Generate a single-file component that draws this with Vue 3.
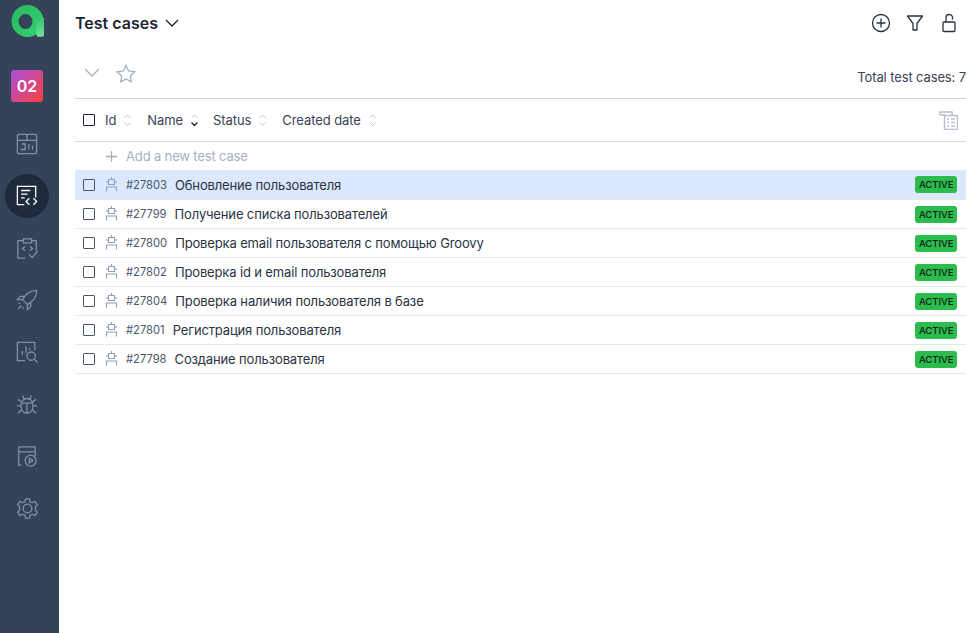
<script setup>
const rows = [
  { id: '#27803', name: 'Обновление пользователя', active: true },
  { id: '#27799', name: 'Получение списка пользователей' },
  { id: '#27800', name: 'Проверка email пользователя с помощью Groovy' },
  { id: '#27802', name: 'Проверка id и email пользователя' },
  { id: '#27804', name: 'Проверка наличия пользователя в базе' },
  { id: '#27801', name: 'Регистрация пользователя' },
  { id: '#27798', name: 'Создание пользователя' },
]
const cols = [
  { label: 'Id' },
  { label: 'Name', sorted: true },
  { label: 'Status' },
  { label: 'Created date' },
]
</script>

<template>
  <div class="app">
    <aside class="side">
      <svg class="logo" width="34" height="34" viewBox="0 0 34 34">
        <defs>
          <linearGradient id="lg" x1="0" y1="0" x2="1" y2="1">
            <stop offset="0" stop-color="#27b85c" />
            <stop offset="1" stop-color="#35d274" />
          </linearGradient>
          <linearGradient id="ls" x1="0" y1="0" x2="0" y2="1">
            <stop offset="0" stop-color="#2fc768" />
            <stop offset="1" stop-color="#6fe39b" />
          </linearGradient>
        </defs>
        <path fill-rule="evenodd" d="M16.500 1a16 16 0 1 0 0 32a16 16 0 1 0 0-32zM14.500 10a7 7.500 0 1 1 0 15a7 7.500 0 1 1 0-15z" fill="url(#lg)" />
        <path d="M25.500 14h7.500v17c0 1-.7 1.800-1.800 1.800h-3.900c-1.100 0-1.800-.8-1.800-1.800z" fill="url(#ls)" />
      </svg>
      <div class="badge">02</div>
      <button class="nav">
        <svg width="22" height="22" viewBox="0 0 24 24"><rect x="1.500" y="1.500" width="21" height="21" rx="1.500" /><path d="M1.500 8h21M12 1.500V8M6 12h4v6H5M14 12v6M18 14v4" /></svg>
      </button>
      <button class="nav current">
        <svg width="22" height="22" viewBox="0 0 24 24"><path d="M9 21.500H1.500v-20h20v12" /><path d="M5.500 6h10M5.500 10h7M5.500 14h4M14.500 14.500l-3.500 3.500 3.500 3.500M19 14.500l3.500 3.500-3.500 3.500" /></svg>
      </button>
      <button class="nav">
        <svg width="22" height="22" viewBox="0 0 24 24"><path d="M8 4H2v19h8M17 4h5v11" /><path d="M8 2h9v4.500H8zM10 10l-3 2.500L10 15M15 10l3 2.500-3 2.500M14 19l3.500 3.500 6-7" /></svg>
      </button>
      <button class="nav">
        <svg width="22" height="22" viewBox="0 0 24 24"><path d="M22.500 1.500c-5.500 0-9.500 2-13 6.500L7 11.500l5.500 5.500 3.500-2.500c4.500-3.500 6.500-7.500 6.500-13zM9.500 8H5L1.500 11.500 7 11.500M16 14.500V19l-3.500 3.500L12.500 17M6 18l-3.500 3.500M8.500 20L7 21.500M4.500 15L3 16.500" /></svg>
      </button>
      <button class="nav">
        <svg width="22" height="22" viewBox="0 0 24 24"><path d="M10 21.500H1.500v-20h19V10" /><path d="M7 15v-4M11 13V6M15 10V8" /><circle cx="16.500" cy="16.500" r="4.500" /><path d="M20 20l3.500 3.500" /></svg>
      </button>
      <button class="nav">
        <svg width="22" height="22" viewBox="0 0 24 24"><path d="M12 6C8 6 5.500 9.500 5.500 14s2.500 8 6.500 8 6.500-3.500 6.500-8-2.500-8-6.500-8zM8.500 7L7.500 2.500M15.500 7l1-4.500M5.500 11h13M12 11v11M5.500 14H1M18.500 14H23M6 18.500L2 22M18 18.500l4 3.500M6 9.500L2 7M18 9.500l4-2.500" /></svg>
      </button>
      <button class="nav">
        <svg width="22" height="22" viewBox="0 0 24 24"><path d="M6 22H3V2h18v10M3 7.500h18" /><circle cx="16" cy="17" r="6" /><path d="M14.500 14.500l4 2.500-4 2.500z" /></svg>
      </button>
      <button class="nav">
        <svg width="23" height="23" viewBox="0 0 24 24"><circle cx="12" cy="12" r="4.500" /><path d="M10 2h4l.7 3 2.300 1 2.700-1.500 2.600 3.500-2 2.200v3.600l2 2.200-2.600 3.500-2.700-1.500-2.300 1-.7 3h-4l-.7-3-2.300-1-2.700 1.500L1.700 16l2-2.200v-3.600L1.700 8l2.600-3.500L7 6l2.300-1z" stroke-linejoin="round" /></svg>
      </button>
    </aside>

    <main class="main">
      <header class="top">
        <h1 class="title">Test cases</h1>
        <svg class="caret" width="14" height="8" viewBox="0 0 14 8"><path d="M1 1l6 6 6-6" /></svg>
        <div class="spacer"></div>
        <div class="tools">
          <svg width="20" height="20" viewBox="0 0 20 20"><circle cx="10" cy="10" r="8.500" /><path d="M10 5.500v9M5.500 10h9" /></svg>
          <svg width="18" height="18" viewBox="0 0 18 18"><path d="M1.500 2h15L11 9.500V16H7V9.500z" stroke-linejoin="round" /></svg>
          <svg class="lock" width="16" height="20" viewBox="0 0 16 20"><rect x="2" y="9" width="12" height="9.500" rx="1" /><path d="M5 9V4.500C5 2.800 6.300 1.500 8 1.500s3.500 1.300 3.500 3V6.500" /></svg>
        </div>
      </header>

      <div class="filterbar">
        <svg class="muted" width="16" height="10" viewBox="0 0 16 10"><path d="M1 1l7 7 7-7" /></svg>
        <svg class="muted star" width="20" height="19" viewBox="0 0 20 19"><path d="M10 1.500l2.600 5.500 6 .8-4.400 4.100 1.100 6L10 15l-5.300 2.900 1.100-6L1.400 7.800l6-.8z" /></svg>
        <div class="spacer"></div>
        <span class="total">Total test cases: 7</span>
      </div>

      <div class="head">
        <span class="check dark"></span>
        <div v-for="c in cols" :key="c.label" class="col">
          <span>{{ c.label }}</span>
          <svg width="9" height="14" viewBox="0 0 9 14">
            <path class="up" d="M1.500 5l3-3 3 3" />
            <path :class="c.sorted ? 'down on' : 'down'" d="M1.500 9.500l3 3 3-3" />
          </svg>
        </div>
        <div class="spacer"></div>
        <svg class="muted cols-icon" width="19" height="19" viewBox="0 0 19 19"><path d="M1 4V1h12v3M1 4h5M5.500 4.500h13v14h-13zM8 8h2M12 8h4M8 11.500h2M12 11.500h4M8 15h2M12 15h4" /></svg>
      </div>

      <div class="add">
        <svg class="muted" width="11" height="11" viewBox="0 0 11 11"><path d="M5.500 0v11M0 5.500h11" /></svg>
        <span>Add a new test case</span>
      </div>

      <div v-for="r in rows" :key="r.id" class="row" :class="{ active: r.active }">
        <span class="check"></span>
        <svg class="bot" width="13" height="15" viewBox="0 0 13 15"><path d="M6.500 0v2.500M3.500 2.500h6v5h-6zM2 4v2M11 4v2M1.500 14.500v-4.500h10v4.500" /></svg>
        <span class="rid">{{ r.id }}</span>
        <span class="rname">{{ r.name }}</span>
        <div class="spacer"></div>
        <span class="status">ACTIVE</span>
      </div>
    </main>
  </div>
</template>

<style>
html, body { margin: 0; background: #fff; }
</style>

<style scoped>
.app {
  display: flex;
  width: 980px;
  height: 633px;
  overflow: hidden;
  font-family: Inter, "Noto Sans", sans-serif;
  color: #3a4454;
  background: #fff;
}
.side {
  width: 59px;
  flex: none;
  background: #344357;
  display: flex;
  flex-direction: column;
  align-items: center;
  box-sizing: border-box;
}
.logo { margin: 4px 4px 0 0; }
.badge {
  width: 32px;
  height: 32px;
  margin: 32px 5px 0 0;
  border-radius: 3px;
  background: linear-gradient(135deg, #a94fdc, #f8413f);
  color: #fff;
  font-weight: 600;
  font-size: 16px;
  line-height: 33px;
  text-align: center;
}
.nav {
  width: 44px;
  height: 44px;
  margin: 8px 5px 0 0;
  padding: 0;
  border: 0;
  background: none;
  border-radius: 50%;
  display: flex;
  align-items: center;
  justify-content: center;
}
.badge + .nav { margin-top: 20px; }
.nav svg { fill: none; stroke: #8190a3; stroke-width: 1.400; }
.nav.current { background: #1f2b3d; }
.nav.current svg { stroke: #fff; }
.main {
  width: 891px;
  margin-left: 16px;
  flex: none;
}
.top {
  height: 46px;
  display: flex;
  align-items: center;
}
.title {
  margin: 0;
  font-size: 16px;
  font-weight: 600;
  color: #1c2533;
}
.caret { margin-left: 7px; fill: none; stroke: #1c2533; stroke-width: 1.300; }
.spacer { flex: 1; }
.tools { display: flex; align-items: center; gap: 15px; margin-right: 9px; }
.tools .lock { margin-left: 2px; }
.tools svg { fill: none; stroke: #2a3343; stroke-width: 1.300; }
.muted { fill: none; stroke: #a5b1c4; stroke-width: 1.300; }
.star { margin-left: 1px; }
.filterbar {
  height: 53px;
  box-sizing: border-box;
  display: flex;
  align-items: center;
  gap: 15px;
  padding: 2px 0 0 9px;
  border-bottom: 1px solid #cdd5e0;
}
.total { font-size: 13px; color: #3a4454; margin-top: 8px; letter-spacing: -0.12px; }
.head {
  height: 43px;
  box-sizing: border-box;
  display: flex;
  align-items: center;
  padding-left: 8px;
  border-bottom: 1px solid #d7dce3;
}
.col {
  display: flex;
  align-items: center;
  gap: 7px;
  margin-left: 15px;
  font-size: 13px;
  letter-spacing: -0.08px;
}
.check + .col { margin-left: 10px; }
.col:nth-child(4) { margin-left: 14px; }
.col svg { fill: none; stroke-width: 1; }
.col .up, .col .down { stroke: #c3c9d2; }
.col .down.on { stroke: #1c2533; stroke-width: 1.300; }
.cols-icon { margin-right: 8px; stroke: #b5bfce; stroke-width: 1.500; }
.check {
  width: 10px;
  height: 10px;
  flex: none;
  border: 1px solid #4a5568;
  border-radius: 1px;
}
.check.dark { border-color: #1c2533; }
.add {
  height: 28px;
  display: flex;
  align-items: center;
  gap: 9px;
  padding-left: 31px;
  font-size: 13px;
  letter-spacing: -0.15px;
  color: #a5b1c4;
}
.row {
  height: 29px;
  box-sizing: border-box;
  display: flex;
  align-items: center;
  padding: 0 9px 0 8px;
  border-bottom: 1px solid #e3e7ec;
}
.row.active { height: 30px; background: #dbe8fd; }
.bot { margin: -1px 0 0 10px; fill: none; stroke: #8fa0b8; stroke-width: 1.100; }
.rid { margin-left: 8px; font-size: 11.200px; color: #4c5768; }
.rname { margin-left: 8px; font-size: 13px; letter-spacing: -0.14px; color: #2a3343; }
.status {
  background: #2cbc4e;
  color: #0e1a14;
  font-size: 9.500px;
  font-weight: 500;
  line-height: 17px;
  height: 17px;
  padding: 0 3.500px;
  border-radius: 3px;
}
</style>
